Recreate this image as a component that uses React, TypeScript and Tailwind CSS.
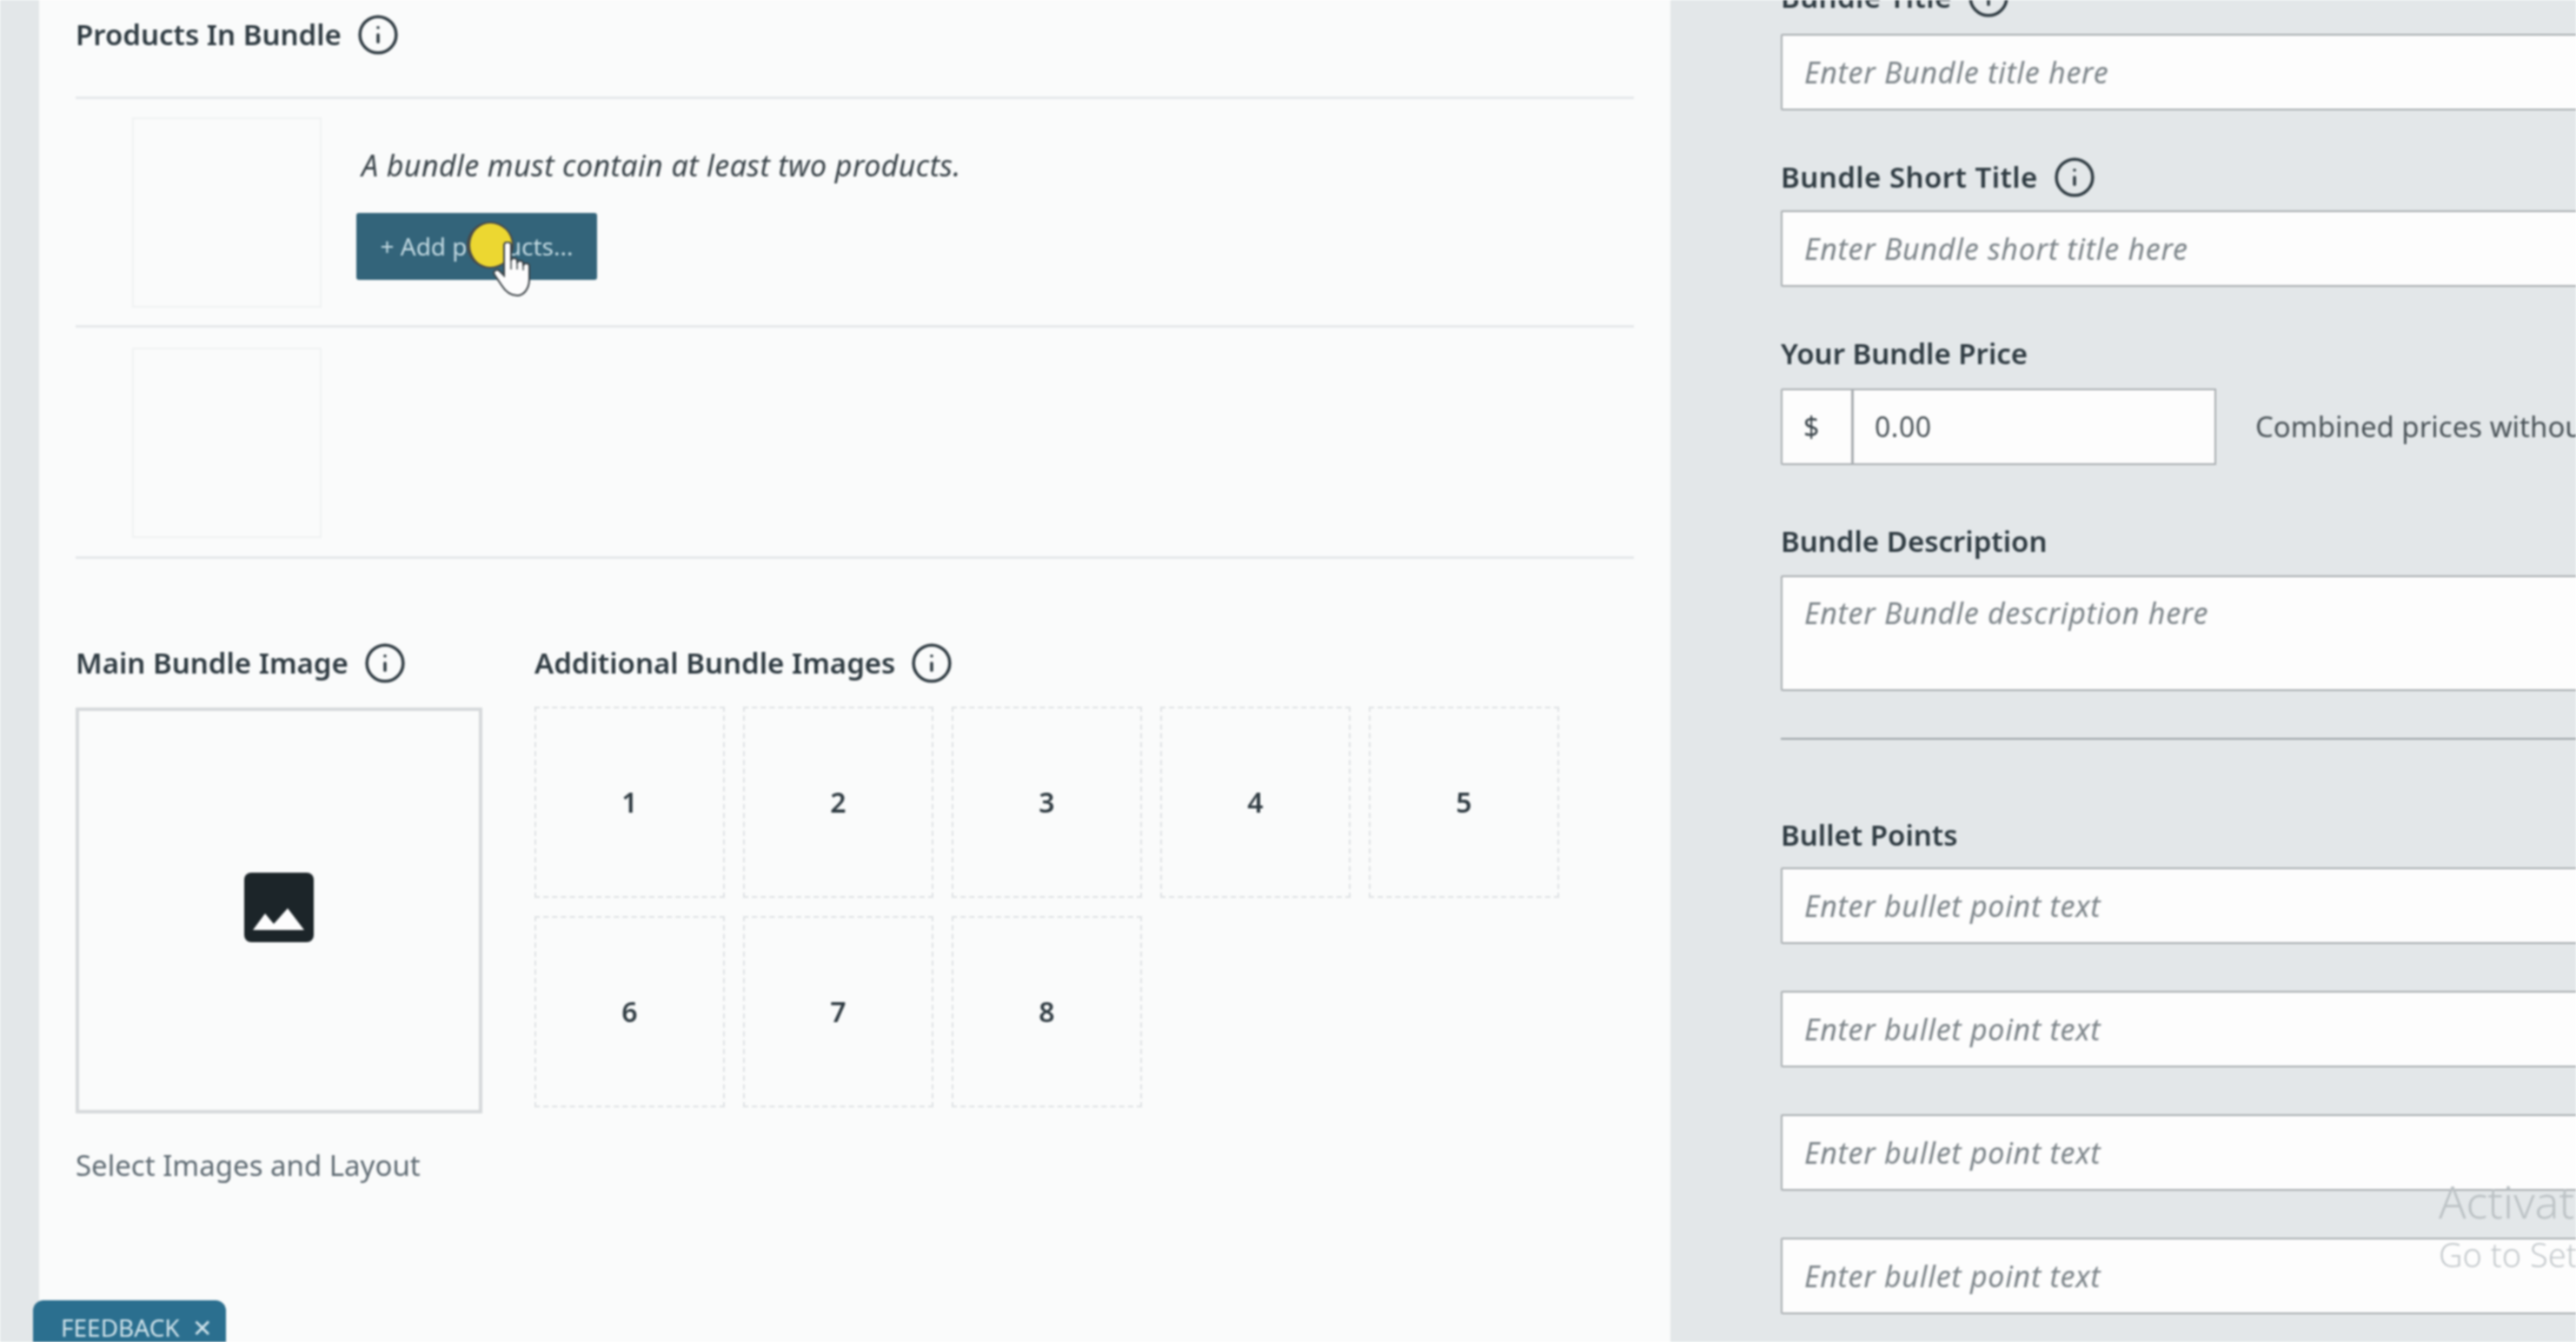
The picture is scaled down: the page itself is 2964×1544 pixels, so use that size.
import { Info } from "lucide-react";

const font = "font-['Noto_Sans','Open_Sans',sans-serif]";

function Label({ text, info, className = "" }: { text: string; info?: boolean; className?: string }) {
  return (
    <div className={`flex h-[44px] items-center gap-[17px] text-[33px] font-semibold whitespace-nowrap text-[#2f3b42] ${className}`}>
      <span>{text}</span>
      {info && <Info size={50} strokeWidth={1.7} className="shrink-0 text-[#2f3b42]" />}
    </div>
  );
}

function Field({ placeholder, className = "" }: { placeholder: string; className?: string }) {
  return (
    <input
      readOnly
      placeholder={placeholder}
      className={`block h-[88px] w-[1000px] rounded-[2px] border-2 border-[#a9aeb1] bg-[#fdfdfd] pl-[25px] text-[34px] tracking-[0.7px] italic outline-none placeholder:text-[#7d858a] ${className}`}
    />
  );
}

function Thumb() {
  return <div className="h-[219px] w-[218px] shrink-0 border-2 border-[#f0f2f3]" />;
}

function Slot({ n }: { n: number }) {
  return (
    <div className="flex h-[220px] w-[219px] items-center justify-center border-2 border-dashed border-[#dfe2e4] text-[32px] font-semibold text-[#2f3b42]">
      {n}
    </div>
  );
}

function Hand() {
  return (
    <svg viewBox="0 0 45 64" className="absolute top-[33px] left-[157px] h-[64px] w-[45px]">
      <path
        d="M13 4a4 3.5 0 0 1 8 0V22a3.5 3 0 0 1 7 0V25a3.5 3 0 0 1 7 0V28a3.5 3 0 0 1 7 0V43C42 54 36 62 28 62C20 62 15 58 10 50L2 38C0 35 3 31 7 33L13 39Z"
        fill="#fdfdfd"
        stroke="#3a4145"
        strokeWidth="2"
      />
      <path d="M21 22V32M28 25V32M35 28V33" fill="none" stroke="#3a4145" strokeWidth="1.5" />
    </svg>
  );
}

export default function App() {
  return (
    <div className={`relative flex h-[1544px] w-[2964px] overflow-hidden bg-[#e3e7e9] ${font} blur-[0.8px]`}>
      {/* left strip */}
      <div className="w-[45px] shrink-0" />

      {/* main panel */}
      <div className="w-[1877px] shrink-0 bg-[#fafbfb] pt-[18px] pl-[42px]">
        <Label text="Products In Bundle" info />
        <div className="mt-[49px] w-[1793px] border-t-[3px] border-[#e6e9eb]" />
        <div className="flex h-[263px] w-[1793px] gap-[46px] border-b-[3px] border-[#e6e9eb] pt-[21px] pl-[65px]">
          <Thumb />
          <div className="flex flex-col items-start">
            <div className="mt-[33px] text-[34px] leading-[44px] tracking-[0.4px] whitespace-nowrap text-[#3a444a] italic">
              A bundle must contain at least two products.
            </div>
            <div className="relative mt-[33px] -ml-[6px] flex h-[77px] w-[277px] items-center justify-center rounded-[3px] bg-[#33647a] pb-[2px] text-[28px] whitespace-nowrap text-[#c3dae2]">
              + Add products...
              <div className="absolute top-[10px] left-[127px] h-[54px] w-[54px] rounded-full border-2 border-l-[4px] border-[#47494a] bg-[#ecd731]" />
              <Hand />
            </div>
          </div>
        </div>
        <div className="flex h-[266px] w-[1793px] border-b-[3px] border-[#e6e9eb] pt-[23px] pl-[65px]">
          <Thumb />
        </div>

        <div className="mt-[98px] flex gap-[60px]">
          <div className="w-[468px] shrink-0">
            <Label text="Main Bundle Image" info />
            <div className="mt-[29px] flex h-[467px] w-[468px] items-center justify-center border-[4px] border-[#d6d9db]">
              <svg viewBox="0 0 80 80" className="mb-[7px] h-[80px] w-[80px]">
                <rect width="80" height="80" rx="8" fill="#1c2529" />
                <path d="M10 66L24 47L34 59L50 41L69 66Z" fill="#fdfdfd" />
              </svg>
            </div>
            <div className="mt-[41px] text-[33px] leading-[38px] whitespace-nowrap text-[#5f6b73]">Select Images and Layout</div>
          </div>
          <div>
            <Label text="Additional Bundle Images" info />
            <div className="mt-[28px] grid w-[1100px] grid-cols-[repeat(5,219px)] gap-x-[21px] gap-y-[21px]">
              {[1, 2, 3, 4, 5, 6, 7, 8].map((n) => (
                <Slot key={n} n={n} />
              ))}
            </div>
          </div>
        </div>
      </div>

      {/* right panel */}
      <div className="flex-1 overflow-hidden pl-[127px]">
        <div className="-mt-[25px] w-[1000px]">
          <Label text="Bundle Title" info className="tracking-[0.4px]" />
          <Field placeholder="Enter Bundle title here" className="mt-[20px]" />
          <Label text="Bundle Short Title" info className="mt-[55px] tracking-[0.45px]" />
          <Field placeholder="Enter Bundle short title here" className="mt-[16px]" />
          <Label text="Your Bundle Price" className="mt-[55px]" />
          <div className="mt-[18px] flex items-center">
            <div className="flex h-[88px] w-[83px] shrink-0 items-center rounded-l-[2px] border-2 border-[#a9aeb1] bg-[#fdfdfd] pl-[24px] text-[32px] text-[#3a444a]">$</div>
            <div className="-ml-[1px] flex h-[88px] w-[419px] shrink-0 items-center border-2 border-[#a9aeb1] bg-[#fdfdfd] pl-[24px] text-[32px] tracking-[0.5px] text-[#4a5358]">0.00</div>
            <span className="ml-[45px] shrink-0 text-[33px] whitespace-nowrap text-[#4a5358]">Combined prices without discounts</span>
          </div>
          <Label text="Bundle Description" className="mt-[66px]" />
          <textarea
            readOnly
            placeholder="Enter Bundle description here"
            className="mt-[17px] block h-[133px] w-[1000px] resize-none rounded-[2px] border-2 border-[#a9aeb1] bg-[#fdfdfd] pt-[16px] pl-[25px] text-[34px] tracking-[0.7px] italic outline-none placeholder:text-[#7d858a]"
          />
          <div className="mt-[54px] border-t-2 border-[#9ba2a6]" />
          <Label text="Bullet Points" className="mt-[88px]" />
          <div className="mt-[15px] flex flex-col gap-[54px]">
            <Field placeholder="Enter bullet point text" />
            <Field placeholder="Enter bullet point text" />
            <Field placeholder="Enter bullet point text" />
            <Field placeholder="Enter bullet point text" />
          </div>
        </div>
      </div>

      {/* feedback tab */}
      <div className="absolute top-[1496px] left-[38px] flex h-[60px] w-[222px] items-start gap-[14px] rounded-t-[12px] bg-[#2b6f8f] pt-[15px] pl-[32px] text-[28px] leading-[32px] text-[#cfe2ea]">
        <span>FEEDBACK</span>
        <span>✕</span>
      </div>

      {/* windows watermark */}
      <div className="absolute top-[1350px] left-[2806px] text-[52px] leading-[64px] font-light whitespace-nowrap text-[#bcc2c5]">Activate Windows</div>
      <div className="absolute top-[1420px] left-[2806px] text-[38px] leading-[46px] font-light whitespace-nowrap text-[#c4c9cc]">Go to Settings to activate Windows.</div>
    </div>
  );
}
